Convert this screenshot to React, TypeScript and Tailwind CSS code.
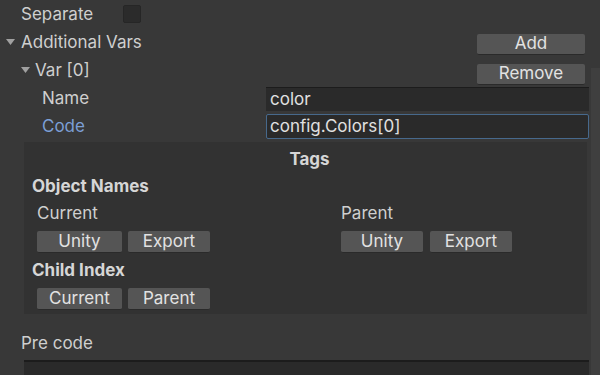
import React from "react";

const Btn = ({ label, w, h = "h-[22px]" }: { label: string; w: string; h?: string }) => (
  <div className={`${w} ${h} bg-[#555555] rounded-[2px] flex items-center justify-center text-[#e2e2e2] border-b border-[#2a2a2a]`}>
    {label}
  </div>
);

const Tri = () => (
  <svg width="9" height="8" viewBox="0 0 9 8" className="shrink-0">
    <path d="M0 1 L9 1 L4.5 7 Z" fill="#a0a0a0" />
  </svg>
);

export default function App() {
  return (
    <div
      className="w-[600px] h-[375px] overflow-hidden bg-[#383838] text-[#cfcfcf] text-[17px] leading-none relative"
      style={{ fontFamily: "Inter, 'Noto Sans', sans-serif" }}
    >
      <div className="absolute right-0 top-[68px] w-[9px] bottom-0 bg-[#3f3f3f]" />
      <div className="flex flex-col pr-[13px]">
        {/* Separate */}
        <div className="h-[28px] flex items-center pl-[21px]">
          <span className="w-[102px]">Separate</span>
          <div className="w-[18px] h-[18px] bg-[#2b2b2b] rounded-[2px] border border-[#262626]" />
        </div>
        {/* Additional Vars */}
        <div className="h-[28px] flex items-center pl-[6px]">
          <Tri />
          <span className="ml-[6px] flex-1">Additional Vars</span>
          <div className="mr-[2px] mt-[4px]">
            <Btn label="Add" w="w-[108px]" h="h-[21px]" />
          </div>
        </div>
        {/* Var [0] */}
        <div className="h-[28px] flex items-center pl-[21px]">
          <Tri />
          <span className="ml-[5px] flex-1">Var [0]</span>
          <div className="mr-[2px] mt-[8px]">
            <Btn label="Remove" w="w-[108px]" h="h-[21px]" />
          </div>
        </div>
        {/* Name */}
        <div className="h-[27px] flex items-center pl-[42px] mt-[1px]">
          <span className="w-[224px]">Name</span>
          <div className="flex-1 h-[24px] bg-[#2a2a2a] border-t border-[#1c1c1c] flex items-center pl-[4px] text-[#e0e0e0] -mr-[2px]">
            color
          </div>
        </div>
        {/* Code */}
        <div className="h-[28px] flex items-center pl-[42px]">
          <span className="w-[224px] text-[#7c9fd6]">Code</span>
          <div className="flex-1 h-[25px] bg-[#2a2a2a] border border-[#47698c] rounded-[2px] flex items-center pl-[3px] text-[#e0e0e0] -mr-[2px]">
            config.Colors[0]
          </div>
        </div>
        {/* Tags box */}
        <div className="ml-[24px] mt-[2px] h-[172px] bg-[#323232] flex flex-col pl-[8px]">
          <div className="h-[32px] flex items-center justify-center font-bold text-[#d6d6d6] mt-[1px]">
            Tags
          </div>
          <div className="h-[22px] flex items-center font-bold text-[#d6d6d6]">Object Names</div>
          <div className="flex mt-[4px]">
            <div className="w-[304px] flex flex-col pl-[5px]">
              <div className="h-[24px] flex items-center">Current</div>
              <div className="flex gap-[6px] mt-[6px]">
                <Btn label="Unity" w="w-[85px]" />
                <Btn label="Export" w="w-[82px]" />
              </div>
            </div>
            <div className="flex flex-col pl-[5px]">
              <div className="h-[24px] flex items-center">Parent</div>
              <div className="flex gap-[7px] mt-[6px]">
                <Btn label="Unity" w="w-[82px]" />
                <Btn label="Export" w="w-[82px]" />
              </div>
            </div>
          </div>
          <div className="h-[24px] flex items-center font-bold text-[#d6d6d6] mt-[5px]">Child Index</div>
          <div className="flex gap-[6px] pl-[5px] mt-[6px]">
            <Btn label="Current" w="w-[85px]" />
            <Btn label="Parent" w="w-[82px]" />
          </div>
        </div>
        {/* Pre code */}
        <div className="h-[46px] flex items-end pl-[21px] pb-[8px]">Pre code</div>
        <div className="ml-[24px] h-[40px] bg-[#2a2a2a] border-t-2 border-[#1c1c1c] -mr-[2px]" />
      </div>
    </div>
  );
}
